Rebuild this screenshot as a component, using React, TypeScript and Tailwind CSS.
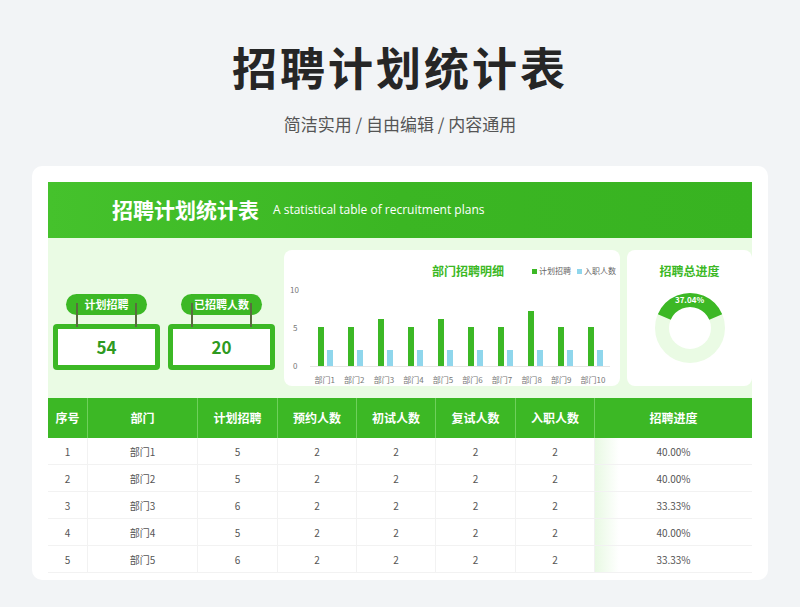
const F = { fontFamily: '"Noto Sans CJK SC", "Noto Sans", sans-serif' };

const plan = [5, 5, 6, 5, 6, 5, 5, 7, 5, 5];
const rows = [
  [1, 5, '40.00%'],
  [2, 5, '40.00%'],
  [3, 6, '33.33%'],
  [4, 5, '40.00%'],
  [5, 6, '33.33%'],
] as const;
const cols = ['w-[40px]', 'w-[110px]', 'w-[80px]', 'w-[79px]', 'w-[79px]', 'w-[80px]', 'w-[79px]', 'flex-1'];
const heads = ['序号', '部门', '计划招聘', '预约人数', '初试人数', '复试人数', '入职人数', '招聘进度'];

function Kpi({ label, value }: { label: string; value: number }) {
  return (
    <div className="relative w-[107px] pt-[30px]">
      <div className="absolute left-[13px] top-0 flex h-[21px] w-[81px] items-center justify-center rounded-full bg-[#3cb825] text-[11px] font-bold text-white">
        {label}
      </div>
      <div className="absolute left-[23px] top-[9px] h-[24px] w-[2px] bg-[#5a6b3f]" />
      <div className="absolute left-[82px] top-[9px] h-[24px] w-[2px] bg-[#5a6b3f]" />
      <div className="rounded-[4px] bg-[#3cb825] p-[5px]">
        <div className="flex h-[36px] items-center justify-center bg-white text-[17px] font-bold text-[#2e9a1f]">{value}</div>
      </div>
    </div>
  );
}

export default function App() {
  const arc = 37.04 / 100;
  const r = 28;
  const c = 2 * Math.PI * r;
  return (
    <div className="flex h-[607px] w-[800px] flex-col items-center bg-[#f2f4f6]" style={F}>
      <h1 className="mt-[38px] text-[45px] font-bold leading-[58px] tracking-[3px] text-[#262626]">招聘计划统计表</h1>
      <p className="mt-[16px] text-[17px] leading-[24px] text-[#555]">简洁实用 / 自由编辑 / 内容通用</p>
      <div className="mt-[30px] h-[414px] w-[736px] overflow-hidden rounded-[10px] bg-white px-[16px] pt-[16px]">
        <div className="flex h-[56px] items-center bg-gradient-to-r from-[#45c22c] via-[#3bb623] to-[#38b321] pl-[64px]">
          <span className="text-[21px] font-bold text-white">招聘计划统计表</span>
          <span className="ml-[14px] text-[12px] text-white" style={{ fontFamily: '"Open Sans", sans-serif' }}>A statistical table of recruitment plans</span>
        </div>
        <div className="flex h-[160px] items-center gap-[7px] bg-[#eafbe4] pl-[5px]">
          <div className="flex gap-[8px] pt-[28px]">
            <Kpi label="计划招聘" value={54} />
            <Kpi label="已招聘人数" value={20} />
          </div>
          <div className="ml-[2px] flex h-[136px] w-[336px] flex-col rounded-[8px] bg-white px-[6px] pt-[12px]">
            <div className="flex items-center whitespace-nowrap">
              <span className="ml-[142px] text-[12px] font-bold text-[#3cb825]">部门招聘明细</span>
              <span className="ml-[28px] flex items-center gap-[2px] text-[8px] text-[#666]"><i className="h-[5px] w-[5px] bg-[#3cb825]" />计划招聘</span>
              <span className="ml-[6px] flex items-center gap-[2px] text-[8px] text-[#666]"><i className="h-[5px] w-[5px] bg-[#8fd6ec]" />入职人数</span>
            </div>
            <div className="relative mt-[10px] h-[78px]">
              <span className="absolute left-[0px] top-[-6px] text-[8px] text-[#777]">10</span>
              <span className="absolute left-[3px] top-[32px] text-[8px] text-[#777]">5</span>
              <span className="absolute left-[3px] top-[70px] text-[8px] text-[#777]">0</span>
              <div className="absolute bottom-[0px] left-[20px] right-[4px] flex h-[78px] items-end justify-around border-b border-[#e5e5e5]">
                {plan.map((p, i) => (
                  <div key={i} className="flex items-end gap-[3px]">
                    <div className="w-[6px] bg-[#3cb825]" style={{ height: p * 7.8 }} />
                    <div className="w-[6px] bg-[#8fd6ec]" style={{ height: 2 * 7.8 }} />
                  </div>
                ))}
              </div>
            </div>
            <div className="ml-[20px] mr-[4px] mt-[7px] flex justify-around text-[8px] text-[#777]">
              {plan.map((_, i) => <span key={i}>部门{i + 1}</span>)}
            </div>
          </div>
          <div className="flex h-[136px] flex-1 flex-col items-center rounded-[8px] bg-white pt-[12px]">
            <span className="text-[12px] font-bold text-[#3cb825]">招聘总进度</span>
            <div className="relative mt-[12px]">
              <svg width="72" height="72" viewBox="0 0 72 72">
                <circle cx="36" cy="36" r={r} fill="none" stroke="#eafbe4" strokeWidth="14" />
                <circle cx="36" cy="36" r={r} fill="none" stroke="#3cb825" strokeWidth="14"
                  strokeDasharray={`${c * arc} ${c}`} transform={`rotate(${-90 - 180 * arc} 36 36)`} />
              </svg>
              <span className="absolute left-0 right-0 top-[2px] text-center text-[8px] font-bold text-white">37.04%</span>
            </div>
          </div>
        </div>
        <div className="flex h-[40px] bg-[#3cb825] text-[12px] font-bold text-white">
          {heads.map((h, i) => (
            <div key={h} className={`${cols[i]} flex items-center justify-center border-r border-[#6fd05c] last:border-r-0`}>{h}</div>
          ))}
        </div>
        {rows.map(([n, p, pct]) => {
          const vals = [n, `部门${n}`, p, 2, 2, 2, 2, pct];
          return (
            <div key={n} className="flex h-[27px] border-b border-[#f2f2f2] text-[10px] text-[#555]">
              {vals.map((v, i) => (
                <div key={i} className={`${cols[i]} relative flex items-center justify-center border-r border-[#f2f2f2] last:border-r-0`}>
                  {i === 7 && <div className="absolute inset-y-0 left-0 w-[24px] bg-gradient-to-r from-[#e8f9e3] to-white" />}
                  <span className="relative">{v}</span>
                </div>
              ))}
            </div>
          );
        })}
      </div>
    </div>
  );
}
